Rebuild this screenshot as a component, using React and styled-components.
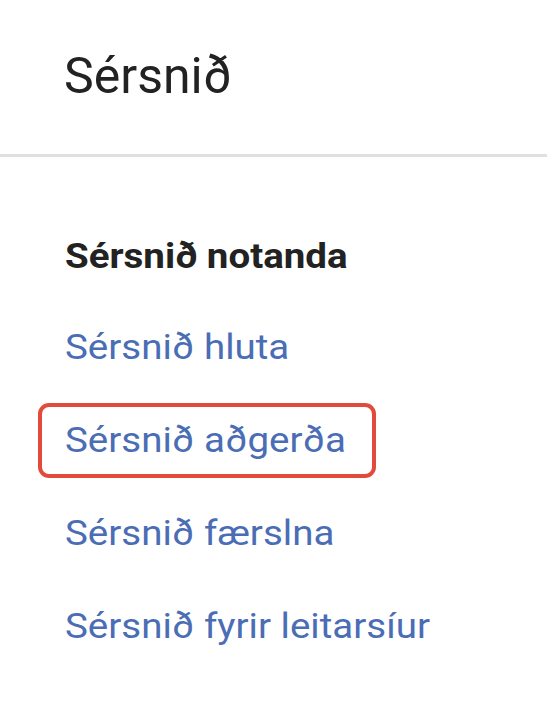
import React from "react";
import styled, { createGlobalStyle } from "styled-components";

const links = [
  { label: "Sérsnið hluta" },
  { label: "Sérsnið aðgerða", active: true },
  { label: "Sérsnið færslna" },
  { label: "Sérsnið fyrir leitarsíur" }
];

export default function App() {
  return (
    <Page>
      <GlobalStyle />
      <Header>
        <Title>Sérsnið</Title>
      </Header>
      <Section>
        <SectionTitle>Sérsnið notanda</SectionTitle>
        <LinkList>
          {links.map(link => (
            <LinkItem key={link.label} $active={link.active}>
              <NavLink href="#">{link.label}</NavLink>
            </LinkItem>
          ))}
        </LinkList>
      </Section>
    </Page>
  );
}

const GlobalStyle = createGlobalStyle`
  body {
    margin: 0;
    background: #ffffff;
    font-family: Roboto, "Liberation Sans", sans-serif;
  }
`;

const Page = styled.div`
  width: 547px;
  height: 719px;
  overflow: hidden;
  background: #ffffff;
`;

const Header = styled.header`
  height: 157px;
  box-sizing: border-box;
  padding: 41px 0 0 64px;
  border-bottom: 3px solid #e0e0e0;
`;

const Title = styled.h1`
  margin: 0;
  font-size: 50px;
  line-height: 70px;
  font-weight: 400;
  color: #222222;
`;

const Section = styled.section`
  padding: 79px 0 0 65px;
`;

const SectionTitle = styled.h2`
  margin: 0 0 33px;
  font-size: 35px;
  line-height: 41px;
  font-weight: 700;
  color: #222222;
  transform: scaleX(1.1);
  transform-origin: left center;
`;

const LinkList = styled.ul`
  list-style: none;
  margin: 0;
  padding: 0;
  display: flex;
  flex-direction: column;
  gap: 18px;
`;

const LinkItem = styled.li`
  position: relative;
  height: 75px;
  display: flex;
  align-items: center;
  &::before {
    content: "";
    display: ${p => (p.$active ? "block" : "none")};
    position: absolute;
    left: -27px;
    top: 0;
    width: 338px;
    height: 75px;
    box-sizing: border-box;
    border: 4px solid #e24a3b;
    border-radius: 11px;
  }
`;

const NavLink = styled.a`
  display: block;
  font-size: 35px;
  line-height: 41px;
  color: #4a6db5;
  text-decoration: none;
  transform: scaleX(1.1);
  transform-origin: left center;
`;
